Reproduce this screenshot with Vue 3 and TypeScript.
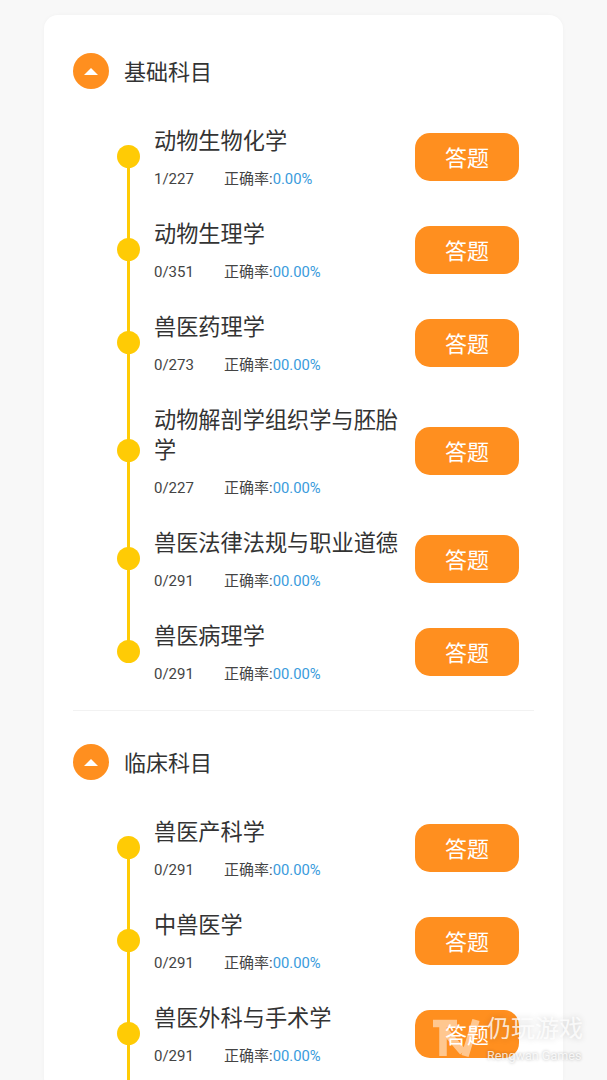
<script setup lang="ts">
interface Row { name: string; count: string; rate: string }
interface Section { title: string; rows: Row[] }
const sections: Section[] = [
  { title: '基础科目', rows: [
    { name: '动物生物化学', count: '1/227', rate: '0.00%' },
    { name: '动物生理学', count: '0/351', rate: '00.00%' },
    { name: '兽医药理学', count: '0/273', rate: '00.00%' },
    { name: '动物解剖学组织学与胚胎学', count: '0/227', rate: '00.00%' },
    { name: '兽医法律法规与职业道德', count: '0/291', rate: '00.00%' },
    { name: '兽医病理学', count: '0/291', rate: '00.00%' },
  ] },
  { title: '临床科目', rows: [
    { name: '兽医产科学', count: '0/291', rate: '00.00%' },
    { name: '中兽医学', count: '0/291', rate: '00.00%' },
    { name: '兽医外科与手术学', count: '0/291', rate: '00.00%' },
  ] },
]
</script>

<template>
  <div class="page">
    <div class="card">
      <section v-for="s in sections" :key="s.title" class="section">
        <header class="head">
          <span class="badge"><span class="tri"></span></span>
          <h2 class="title">{{ s.title }}</h2>
        </header>
        <ul class="rows">
          <li v-for="r in s.rows" :key="r.name" class="row">
            <span class="dot"></span>
            <div class="info">
              <div class="name">{{ r.name }}</div>
              <div class="meta">
                <span class="count">{{ r.count }}</span>
                <span class="rate">正确率:<em>{{ r.rate }}</em></span>
              </div>
            </div>
            <button class="btn">答题</button>
          </li>
        </ul>
      </section>
    </div>
    <div class="mark">
      <svg class="logo" width="52" height="40" viewBox="0 0 52 40">
        <g fill="none" stroke="#fff" stroke-width="7.5" stroke-linejoin="round" opacity=".5">
          <path d="M1 4.5H25" />
          <path d="M11 4V37" />
          <path d="M13 12L31 33" />
          <path d="M33 37L44 1" />
        </g>
      </svg>
      <div class="mark-text">
        <div class="mark-cn">仍玩游戏</div>
        <div class="mark-en">Rengwan Games</div>
      </div>
    </div>
  </div>
</template>

<style>
html, body { margin: 0; background: #f8f8f8; }
</style>

<style scoped>
.page {
  position: relative;
  height: 1080px;
  overflow: hidden;
  padding-top: 15px;
  box-sizing: border-box;
  background: #f8f8f8;
  font-family: Roboto, "Noto Sans CJK SC", sans-serif;
}
.card {
  margin: 0 44px;
  padding: 0 29px;
  background: #fff;
  border-radius: 14px;
  box-shadow: 0 0 4px rgba(0, 0, 0, .03);
}
.section { padding-top: 38px; padding-bottom: 12px; }
.section + .section { border-top: 1px solid #f2f2f2; padding-top: 33px; }
.head { display: flex; align-items: center; gap: 15px; height: 36px; margin-bottom: 21px; }
.badge {
  width: 36px; height: 36px; border-radius: 50%;
  background: #ff8f1f;
  display: flex; align-items: center; justify-content: center;
}
.tri {
  width: 0; height: 0;
  border-left: 7px solid transparent;
  border-right: 7px solid transparent;
  border-bottom: 7px solid #fff;
}
.title { margin: 0; padding-top: 4px; font-size: 22px; font-weight: 400; color: #333; line-height: 30px; }
.rows { list-style: none; margin: 0; padding: 0; }
.row {
  position: relative;
  display: flex;
  align-items: center;
  padding: 15.5px 15px 15.5px 81px;
}
.row::before {
  content: "";
  position: absolute;
  left: 53.5px; top: 0; bottom: 0;
  width: 3px;
  background: #ffcb05;
}
.row:first-child::before { top: 50%; }
.section:first-child .row:last-child::before { bottom: 50%; }
.dot {
  position: absolute;
  left: 43.5px; top: 50%;
  width: 23px; height: 23px;
  margin-top: -11.5px;
  border-radius: 50%;
  background: #ffcb05;
}
.info { flex: 1; min-width: 0; padding-right: 14px; margin: .5px 0 -.5px; }
.name { font-size: 22.2px; line-height: 30px; color: #333; }
.meta { display: flex; font-size: 15px; line-height: 20px; color: #444; margin: 12.5px 0 -.5px; }
.count { width: 70px; }
.rate em { font-style: normal; font-size: 14.8px; color: #3a9bdc; }
.btn {
  flex: none;
  width: 104px; height: 48px;
  border: 0; border-radius: 15px;
  background: #ff8f1f;
  color: #fff;
  font: inherit;
  font-size: 22px;
  padding: 0 0 2px;
}
.mark {
  position: absolute;
  left: 432px; top: 1019px;
  display: flex;
  color: rgba(255, 255, 255, .8);
  text-shadow: 0 0 6px rgba(0, 0, 0, .18);
}
.logo { flex: none; margin-right: 3px; }
.mark-cn { font-size: 24px; line-height: 30px; margin-top: -5px; }
.mark-en { font-size: 12.6px; line-height: 16px; margin-top: 4px; text-shadow: 0 0 3px rgba(0, 0, 0, .3); }
</style>
